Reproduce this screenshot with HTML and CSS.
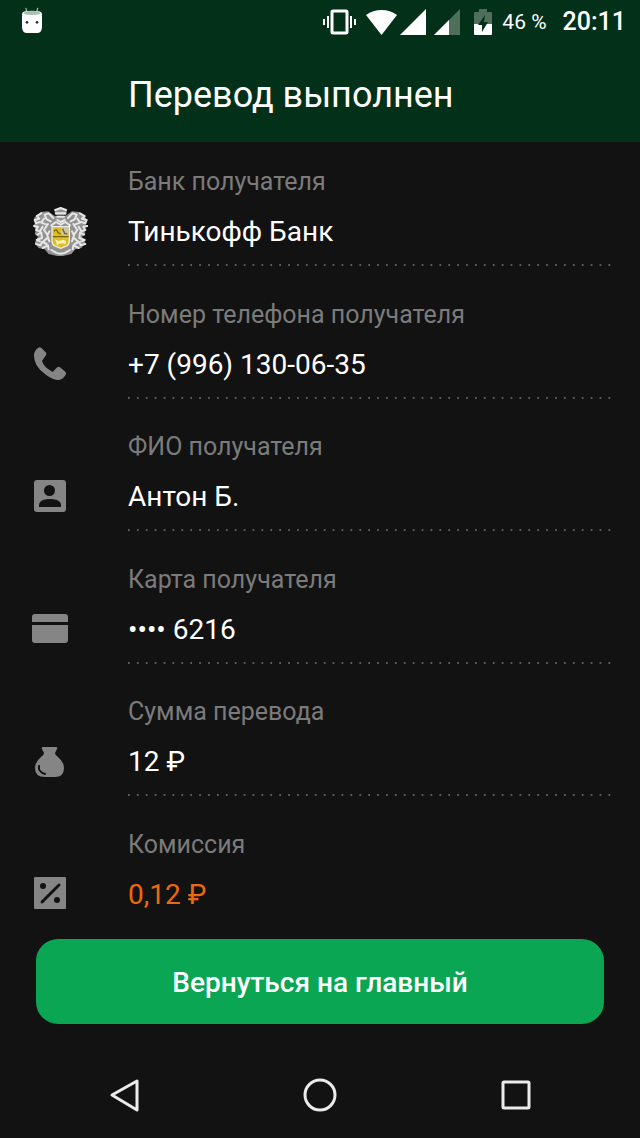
FILE: index.html
```html
<!DOCTYPE html>
<html lang="ru">
<head>
<meta charset="utf-8">
<meta name="viewport" content="width=device-width, initial-scale=1">
<title>Перевод выполнен</title>
<link rel="stylesheet" href="styles.css">
</head>
<body>
<div class="screen">
  <header class="header">
    <div class="status">
      <svg class="status-android" width="22" height="26" viewBox="0 0 66 78" aria-hidden="true">
        <path d="M15 4l4 16M50 4l-4 16" stroke="#9db5a6" stroke-width="4" stroke-linecap="round"/>
        <path d="M3 22q0-7 9-9 20-4 42 0 9 2 9 9v38q0 17-13 18-17 1-34 0Q3 77 3 60z" fill="#fff"/>
        <path d="M7 20q3-6 12-7 15-2 29 0 8 1 11 7-26 8-52 0z" fill="#a9bdb0"/>
        <circle cx="18" cy="46" r="4" fill="#1b3a28"/><circle cx="48" cy="46" r="4" fill="#1b3a28"/>
      </svg>
      <div class="status-right">
        <svg width="33" height="26" viewBox="0 0 33 26" fill="none" stroke="#fff" aria-hidden="true">
          <rect x="9" y="2" width="15" height="22" rx="1" stroke-width="3"/>
          <path d="M5 7v12M28 7v12M1 10v6M32 10v6" stroke-width="2"/>
        </svg>
        <svg class="gap-wifi" width="31" height="26" viewBox="0 0 31 26" fill="#fff" aria-hidden="true"><path d="M0 6Q7 1 15.500 1T31 6L15.500 26z"/></svg>
        <svg class="gap-cell" width="26" height="26" viewBox="0 0 26 26" fill="#fff" aria-hidden="true"><path d="M26 0v26H0z"/></svg>
        <svg class="gap-cell2" width="26" height="26" viewBox="0 0 26 26" aria-hidden="true"><path d="M26 0v26H0z" fill="#4f6f5b"/><path d="M15 11v15H0z" fill="#fff"/></svg>
        <svg class="gap-battery" width="18" height="26" viewBox="0 0 18 26" aria-hidden="true">
          <path d="M1 3h4V0h8v3h4q1 0 1 1v11H0V4q0-1 1-1z" fill="#4f6f5b"/>
          <path d="M0 15h18v10q0 1-1 1H1q-1 0-1-1z" fill="#fff"/>
          <path d="M11 6L4 16h4v7l6-10h-4z" fill="#033019"/>
        </svg>
        <span class="percent">46 %</span>
        <time class="clock">20:11</time>
      </div>
    </div>
    <h1 class="title">Перевод выполнен</h1>
  </header>

  <main class="details">
    <section class="row">
      <svg class="icon" width="56" height="50" viewBox="36 46 168 150" aria-hidden="true">
        <path d="M104 76L84 62 62 64 42 82l4 14-6 10 8 10-4 14 10 8-10 18 12 16 18 4 12 14 34 8 34-8 12-14 18-4 12-16-10-18 10-8-4-14 8-10-6-10 4-14-20-18-22-2-20 14z" fill="#929292"/>
        <path d="M102 54l8 4 12-8 12 8 8-4-4 20h-32z" fill="#929292"/>
        <g fill="none" stroke="#e7e7e7" stroke-width="6" stroke-linecap="round" stroke-linejoin="round">
          <path d="M106 58l16-6 16 6M108 68h28M112 78h20M112 88l10 6 12-6"/>
          <path d="M100 82l-14-14-12 4 6 14 12 6M64 68l-14 8 8 8-14 4 4 10 12-4M72 84l-8 12 16 6M42 106l12 2-6 10 12 4 8-14M84 100l-12 18 10 14M52 132l12-6 2 16-16 6 10 4M82 142l-14 12 12 6M48 160l14 4 4-10M68 172l16-8 2 12M88 122l-6 12 6 18"/>
          <path d="M144 82l14-14 12 4-6 14-12 6M180 68l14 8-8 8 14 4-4 10-12-4M172 84l8 12-16 6M202 106l-12 2 6 10-12 4-8-14M160 100l12 18-10 14M192 132l-12-6-2 16 16 6-10 4M162 142l14 12-12 6M196 160l-14 4-4-10M176 172l-16-8-2 12M156 122l6 12-6 18"/>
          <path d="M94 104l14-10 14 8 14-8 14 10M94 178l14 8q14 6 28 0l14-8"/>
        </g>
        <path d="M96 108h52v42q0 14-12 17l-14 6-14-6q-12-3-12-17z" fill="#dfbd20" stroke="#ededed" stroke-width="4"/>
        <path d="M123 111h22v25h-12l-10-8z" fill="#c9c5b0"/>
        <path d="M98 138h48M102 122q8-10 12 4l8 4M128 114l6 14 8 2" fill="none" stroke="#766410" stroke-width="4"/>
        <path d="M105 146l11 5 15-4 8 6-4 8-5-3-14 1-5 6-2-10z" fill="#fff4bd"/>
      </svg>
      <div class="field"><h2 class="label">Банк получателя</h2><p class="value">Тинькофф Банк</p><svg class="dots" aria-hidden="true"><line x1="0" y1="1" x2="100%" y2="1" pathLength="544"/></svg></div>
    </section>
    <section class="row">
      <svg class="icon" width="36" height="36" viewBox="36 48 108 108" fill="#858585" aria-hidden="true"><path d="M54 54q5-4 10 0l13 13q4 5 1 9L66 92q4 18 32 34l12-13q5-5 10-1l16 13q4 4 1 9-9 16-24 16-18-1-38-18Q41 108 42 76q0-13 12-22z"/></svg>
      <div class="field"><h2 class="label">Номер телефона получателя</h2><p class="value">+7 (996) 130-06-35</p><svg class="dots" aria-hidden="true"><line x1="0" y1="1" x2="100%" y2="1" pathLength="544"/></svg></div>
    </section>
    <section class="row">
      <svg class="icon" width="36" height="36" viewBox="0 0 36 36" aria-hidden="true"><rect x="2" y="2" width="32" height="32" rx="3" fill="#858585"/><circle cx="17.500" cy="12.500" r="5.500" fill="#121212"/><path d="M7 29v-2q0-3 4-5 7-2 14 0 4 2 4 5v2z" fill="#121212"/></svg>
      <div class="field"><h2 class="label">ФИО получателя</h2><p class="value">Антон Б.</p><svg class="dots" aria-hidden="true"><line x1="0" y1="1" x2="100%" y2="1" pathLength="544"/></svg></div>
    </section>
    <section class="row">
      <svg class="icon" width="36" height="36" viewBox="0 0 36 36" fill="#858585" aria-hidden="true"><path d="M0 11V6q0-3 3-3h30q3 0 3 3v5zM0 14h36v15q0 3-3 3H3q-3 0-3-3z"/></svg>
      <div class="field"><h2 class="label">Карта получателя</h2><p class="value">•••• 6216</p><svg class="dots" aria-hidden="true"><line x1="0" y1="1" x2="100%" y2="1" pathLength="544"/></svg></div>
    </section>
    <section class="row">
      <svg class="icon" width="36" height="36" viewBox="0 0 36 36" aria-hidden="true"><path d="M11 4h13q2 0 1 2l-2 4q0 2 3 4 6 5 6 11 0 9-9 9H13Q3 34 3 25q0-6 6-11 3-2 3-4l-2-4q-1-2 1-2z" fill="#858585"/><path d="M7 23q-1 6 6 8" fill="none" stroke="#121212" stroke-width="2" stroke-linecap="round"/></svg>
      <div class="field"><h2 class="label">Сумма перевода</h2><p class="value">12 ₽</p><svg class="dots" aria-hidden="true"><line x1="0" y1="1" x2="100%" y2="1" pathLength="544"/></svg></div>
    </section>
    <section class="row">
      <svg class="icon" width="36" height="36" viewBox="0 0 36 36" aria-hidden="true"><rect x="2" y="1" width="32" height="32" rx="1" fill="#858585"/><path d="M10 26L27 9" stroke="#121212" stroke-width="3" stroke-linecap="round"/><circle cx="11" cy="10" r="3" fill="#121212"/><circle cx="25" cy="24" r="3" fill="#121212"/></svg>
      <div class="field"><h2 class="label">Комиссия</h2><p class="value value-fee">0,12 ₽</p></div>
    </section>
  </main>

  <footer class="actions"><button class="primary" type="button">Вернуться на главный</button></footer>

  <nav class="system-nav" aria-label="Системная навигация">
    <button type="button" aria-label="Назад"><svg width="36" height="36" viewBox="0 0 36 36"><path d="M31 4v29L6 18z"/></svg></button>
    <button type="button" aria-label="Домой"><svg width="36" height="36" viewBox="0 0 36 36"><circle cx="18" cy="18" r="15"/></svg></button>
    <button type="button" aria-label="Недавние приложения"><svg width="36" height="36" viewBox="0 0 36 36"><rect x="5" y="5" width="26" height="26" rx="1"/></svg></button>
  </nav>
</div>
</body>
</html>
```
FILE: styles.css
```css
* { box-sizing: border-box; }
body { margin: 0; background: #121212; color: #fff; font-family: Roboto, "Noto Sans", sans-serif; }
h1, h2, p { margin: 0; font-weight: 400; }
button { border: 0; padding: 0; background: none; color: inherit; font-family: inherit; }
svg { display: block; flex: none; }

.screen { display: flex; flex-direction: column; min-height: 100vh; }
.header { background: #033019; padding-bottom: 22px; }
.status { display: flex; align-items: center; justify-content: space-between; height: 44px; padding: 0 14px 0 21px; }
.status-android { margin-bottom: 4px; }
.status-right { display: flex; align-items: center; }
.gap-wifi { margin-left: 10px; }
.gap-cell { margin-left: 3px; }
.gap-cell2 { margin-left: 8px; }
.gap-battery { margin-left: 14px; }
.percent { margin-left: 10px; font-size: 21px; line-height: 28px; }
.clock { margin-left: 16px; font-size: 25px; line-height: 28px; font-weight: 500; }
.title { padding: 8px 28px 0 128px; margin-top: 18px; font-size: 36px; line-height: 50px; }

.details { flex: 1; display: grid; grid-auto-rows: 1fr; }
.row { display: grid; grid-template-columns: 96px 1fr; padding: 25px 28px 0 32px; }
.icon { align-self: start; justify-self: start; height: 50px; margin-top: 39px; }
.label { color: #7b7b7b; font-size: 25px; line-height: 30px; }
.value { margin-top: 17px; font-size: 28px; line-height: 36px; }
.value-fee { color: #ec6a0c; }
.dots { width: 100%; height: 2px; margin-top: 14px; stroke: #5c5c5c; stroke-width: 2px; stroke-dasharray: 2 8; }

.actions { padding: 2px 36px 29px; }
.primary { display: block; width: 100%; padding: 27px 16px 25px; border-radius: 22px; background: #0aa653; font-size: 28px; line-height: 33px; font-weight: 500; }
.system-nav { display: flex; justify-content: center; gap: 160px; padding: 24px 16px 25px; }
.system-nav svg { fill: none; stroke: #ebebeb; stroke-width: 3px; stroke-linejoin: round; }
```
